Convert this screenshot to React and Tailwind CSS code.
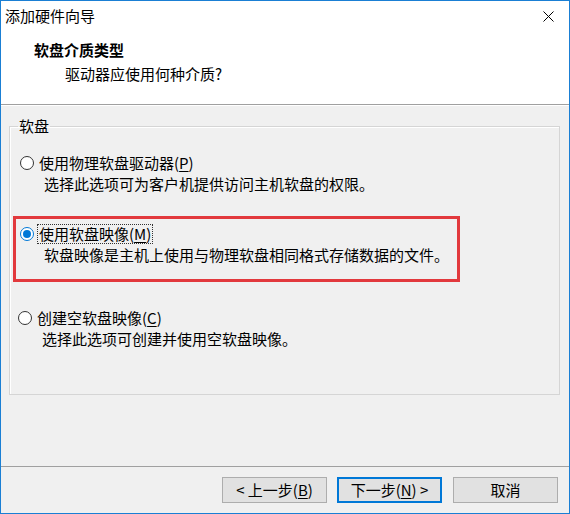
import React, { useState } from "react";

const font = "font-['Noto_Sans_CJK_SC',sans-serif]";

const Radio = ({ checked }) => (
  <span
    className={`flex items-center justify-center w-[14px] h-[14px] rounded-full border bg-white shrink-0 ${
      checked ? "border-[#0078d7]" : "border-[#333333]"
    }`}
  >
    {checked && <span className="w-[8px] h-[8px] rounded-full bg-[#0078d7]" />}
  </span>
);

const Hotkey = ({ k }) => (
  <>
    (<span className="underline underline-offset-2">{k}</span>)
  </>
);

const WizardDialog = () => {
  const [choice, setChoice] = useState("image");

  const options = [
    {
      id: "physical",
      label: "使用物理软盘驱动器",
      key: "P",
      desc: "选择此选项可为客户机提供访问主机软盘的权限。",
    },
    {
      id: "image",
      label: "使用软盘映像",
      key: "M",
      desc: "软盘映像是主机上使用与物理软盘相同格式存储数据的文件。",
    },
    {
      id: "blank",
      label: "创建空软盘映像",
      key: "C",
      desc: "选择此选项可创建并使用空软盘映像。",
    },
  ];

  const renderOption = (opt) => (
    <div className="flex flex-col cursor-default" onClick={() => setChoice(opt.id)}>
      <div className="flex items-center h-[20px]">
        <Radio checked={choice === opt.id} />
        <span
          className={`ml-[4px] px-[1px] leading-[18px] ${
            opt.id === "image" ? "outline outline-1 outline-dotted outline-[#333]" : ""
          }`}
        >
          {opt.label}
          <Hotkey k={opt.key} />
        </span>
      </div>
      <div className="pl-[24px] leading-[20px] mt-[1px]">{opt.desc}</div>
    </div>
  );

  return (
    <div
      className={`w-[570px] h-[514px] border border-[#1a7fd4] bg-[#f0f0f0] flex flex-col text-[15px] text-black ${font}`}
    >
      {/* Title bar */}
      <div className="h-[30px] bg-white flex items-center justify-between pl-[4px] pr-[15px]">
        <span className="leading-[20px]">添加硬件向导</span>
        <svg width="11" height="11" viewBox="0 0 11 11">
          <path d="M0.5 0.5 L10.5 10.5 M10.5 0.5 L0.5 10.5" stroke="#000" strokeWidth="1" />
        </svg>
      </div>

      {/* Header */}
      <div className="h-[73px] bg-white pt-[9px] pl-[33px]">
        <div className="font-bold leading-[20px]">软盘介质类型</div>
        <div className="leading-[20px] mt-[4px] pl-[31px]">驱动器应使用何种介质?</div>
      </div>
      <div className="h-px bg-[#a0a0a0]" />
      <div className="h-px bg-white" />

      {/* Body */}
      <div className="flex-1 pt-[10px] pl-[8px] pr-[9px]">
        <fieldset className="h-[279px] border border-[#d5d5d5] shadow-[inset_1px_1px_0_#ffffff] px-0">
          <legend className="ml-[8px] px-[1px] leading-[20px]">软盘</legend>
          <div className="pl-[10px] pt-[17px]">{renderOption(options[0])}</div>

          <div className="ml-[3px] mt-[22px] w-[447px] h-[66px] border-[3px] border-[#e2393d] pl-[4px] pt-[5px]">
            {renderOption(options[1])}
          </div>

          <div className="pl-[8px] pt-[26px]">{renderOption(options[2])}</div>
        </fieldset>
      </div>

      {/* Footer */}
      <div className="h-px bg-[#a0a0a0]" />
      <div className="h-[46px] flex justify-end items-start pt-[10px] pr-[11px] gap-[10px]">
        <button className="w-[105px] h-[26px] bg-[#e1e1e1] border border-[#adadad] leading-[20px]">
          &lt; 上一步<Hotkey k="B" />
        </button>
        <button className="w-[105px] h-[26px] bg-[#e1e1e1] border-2 border-[#0078d7] leading-[20px]">
          下一步<Hotkey k="N" /> &gt;
        </button>
        <button className="w-[105px] h-[26px] ml-px bg-[#e1e1e1] border border-[#adadad] leading-[20px]">
          取消
        </button>
      </div>
    </div>
  );
};

export default function App() {
  return <WizardDialog />;
}
